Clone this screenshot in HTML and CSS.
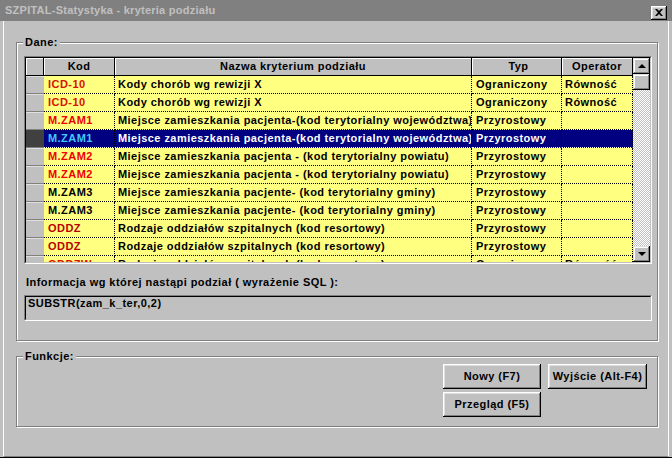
FILE: index.html
```html
<!DOCTYPE html>
<html lang="pl">
<head>
<meta charset="utf-8">
<title>SZPITAL-Statystyka - kryteria podziału</title>
<link rel="stylesheet" href="styles.css">
</head>
<body>
<div class="window">
  <div class="titlebar">
    <span class="title">SZPITAL-Statystyka - kryteria podziału</span>
    <span class="close"><svg width="8" height="7" viewBox="0 0 8 7"><path d="M0 0h2l2 2 2-2h2L5 3.5 8 7H6L4 5 2 7H0l3-3.5z" fill="#000"/></svg></span>
  </div>
  <div class="client">
    <div class="group dane">
      <span class="group-label">Dane:</span>
      <div class="sunken grid">
        <div class="inner grid-inner">
          <div class="table">
            <div class="row hdr">
              <div class="cell ind"></div>
              <div class="cell">Kod</div>
              <div class="cell">Nazwa kryterium podziału</div>
              <div class="cell">Typ</div>
              <div class="cell">Operator</div>
            </div>
            <div class="row">
              <div class="cell ind"></div>
              <div class="cell kod red">ICD-10</div>
              <div class="cell">Kody chorób wg rewizji X</div>
              <div class="cell">Ograniczony</div>
              <div class="cell">Równość</div>
            </div>
            <div class="row">
              <div class="cell ind"></div>
              <div class="cell kod red">ICD-10</div>
              <div class="cell">Kody chorób wg rewizji X</div>
              <div class="cell">Ograniczony</div>
              <div class="cell">Równość</div>
            </div>
            <div class="row">
              <div class="cell ind"></div>
              <div class="cell kod red2">M.ZAM1</div>
              <div class="cell">Miejsce zamieszkania pacjenta-(kod terytorialny województwa)</div>
              <div class="cell">Przyrostowy</div>
              <div class="cell"></div>
            </div>
            <div class="row sel">
              <div class="cell ind"></div>
              <div class="cell kod">M.ZAM1</div>
              <div class="cell">Miejsce zamieszkania pacjenta-(kod terytorialny województwa)</div>
              <div class="cell">Przyrostowy</div>
              <div class="cell"></div>
            </div>
            <div class="row">
              <div class="cell ind"></div>
              <div class="cell kod red2">M.ZAM2</div>
              <div class="cell">Miejsce zamieszkania pacjenta - (kod terytorialny powiatu)</div>
              <div class="cell">Przyrostowy</div>
              <div class="cell"></div>
            </div>
            <div class="row">
              <div class="cell ind"></div>
              <div class="cell kod red2">M.ZAM2</div>
              <div class="cell">Miejsce zamieszkania pacjenta - (kod terytorialny powiatu)</div>
              <div class="cell">Przyrostowy</div>
              <div class="cell"></div>
            </div>
            <div class="row">
              <div class="cell ind"></div>
              <div class="cell kod">M.ZAM3</div>
              <div class="cell">Miejsce zamieszkania pacjente- (kod terytorialny gminy)</div>
              <div class="cell">Przyrostowy</div>
              <div class="cell"></div>
            </div>
            <div class="row">
              <div class="cell ind"></div>
              <div class="cell kod">M.ZAM3</div>
              <div class="cell">Miejsce zamieszkania pacjente- (kod terytorialny gminy)</div>
              <div class="cell">Przyrostowy</div>
              <div class="cell"></div>
            </div>
            <div class="row">
              <div class="cell ind"></div>
              <div class="cell kod dark">ODDZ</div>
              <div class="cell">Rodzaje oddziałów szpitalnych (kod resortowy)</div>
              <div class="cell">Przyrostowy</div>
              <div class="cell"></div>
            </div>
            <div class="row">
              <div class="cell ind"></div>
              <div class="cell kod dark">ODDZ</div>
              <div class="cell">Rodzaje oddziałów szpitalnych (kod resortowy)</div>
              <div class="cell">Przyrostowy</div>
              <div class="cell"></div>
            </div>
            <div class="row">
              <div class="cell ind"></div>
              <div class="cell kod red">ODDZW</div>
              <div class="cell">Rodzaje oddziałów szpitalnych (kod resortowy)</div>
              <div class="cell">Ograniczony</div>
              <div class="cell">Równość</div>
            </div>
          </div>
          <div class="vscroll">
            <div class="sbtn"><span class="arrow up"></span></div>
            <div class="sbtn thumb"></div>
            <div class="track"></div>
            <div class="sbtn"><span class="arrow down"></span></div>
          </div>
        </div>
      </div>
      <div class="info-label">Informacja wg której nastąpi podział ( wyrażenie SQL ):</div>
      <div class="sunken sql">
        <div class="inner sql-inner">SUBSTR(zam_k_ter,0,2)</div>
      </div>
    </div>
    <div class="group funkcje">
      <span class="group-label">Funkcje:</span>
      <div class="buttons">
        <div class="btn">Nowy (F7)</div>
        <div class="btn">Wyjście (Alt-F4)</div>
        <div class="btn">Przegląd (F5)</div>
      </div>
    </div>
  </div>
</div>
</body>
</html>
```
FILE: styles.css
```css
* { box-sizing: border-box; }

body {
  margin: 0;
  width: 672px;
  height: 458px;
  overflow: hidden;
  background: #c0c0c0;
  font-family: "Liberation Sans", Arial, sans-serif;
  font-weight: bold;
  font-size: 11px;
  letter-spacing: 0.45px;
  color: #000;
}

.window {
  height: 458px;
  display: flex;
  flex-direction: column;
  border-bottom: 1px solid #000;
}

.titlebar {
  height: 21px;
  flex: none;
  background: #808080;
  color: #c0c0c0;
  display: flex;
  align-items: center;
  justify-content: space-between;
  padding: 0 5px 0 5px;
}

.title { line-height: 13px; letter-spacing: 0.25px; }

.close {
  width: 16px;
  height: 14px;
  background: #c0c0c0;
  box-shadow: inset -1px -1px #000, inset 1px 1px #fff, inset -2px -2px #808080, inset 2px 2px #dfdfdf;
  display: flex;
  align-items: center;
  justify-content: center;
  margin-top: 4px;
}

.close svg { display: block; }

.client {
  flex: 1;
  margin: 0 3px;
  border-left: 1px solid #fff;
  border-right: 1px solid #fff;
  border-bottom: 1px solid #808080;
  padding-top: 21px;
}

.group {
  position: relative;
  width: 642px;
  margin-left: 12px;
  border: 1px solid #808080;
  box-shadow: 1px 1px 0 #fff, inset 1px 1px 0 #fff;
}

.group-label {
  position: absolute;
  left: 6px;
  top: -7px;
  padding: 0 2px;
  line-height: 13px;
  background: #c0c0c0;
}

.dane {
  padding: 13px 5px 19px 7px;
}

.sunken {
  border: 1px solid;
  border-color: #808080 #fff #fff #808080;
}

.sunken > .inner {
  border: 1px solid;
  border-color: #000 #c0c0c0 #c0c0c0 #000;
}

.grid {
  width: 628px;
  height: 208px;
}

.grid-inner {
  height: 100%;
  display: flex;
}

.table {
  width: 607px;
  height: 100%;
  overflow: hidden;
}

.row {
  display: grid;
  grid-template-columns: 18px 71px 357px 90px 71px;
  height: 18px;
}

.cell {
  height: 18px;
  line-height: 17px;
  padding-left: 3px;
  white-space: nowrap;
  overflow: hidden;
  background: #ffff80;
  border-right: 1px dotted #000;
  border-bottom: 1px dotted #000;
}

.cell.kod { padding-left: 4px; }

.row .cell:nth-child(4) { padding-left: 4px; }

.cell.ind {
  background: #c0c0c0;
  border-right: none;
  border-bottom: 1px solid #808080;
  box-shadow: inset 0 1px #e0e0e0;
}

.hdr .cell {
  background: #c0c0c0;
  text-align: center;
  padding-left: 0;
  border-right: 1px solid #000;
  border-bottom: 1px solid #000;
  box-shadow: inset 1px 1px #fff;
}

.hdr .cell.ind { border-right: 1px solid #000; }

.red { color: #d81000; }
.red2 { color: #f00000; }
.dark { color: #b80000; }

.sel .cell {
  background: #000080;
  color: #fff;
  border-bottom-color: #fff;
}

.sel .cell.kod { color: #40c8ff; }

.sel .cell.ind {
  background: #404040;
  box-shadow: none;
  border-bottom-color: #808080;
}

.row.sel { box-shadow: 0 -1px 0 #fff; }

.vscroll {
  width: 17px;
  height: 100%;
  display: flex;
  flex-direction: column;
}

.sbtn {
  height: 16px;
  flex: none;
  background: #c0c0c0;
  box-shadow: inset -1px -1px #000, inset 1px 1px #dfdfdf, inset -2px -2px #808080, inset 2px 2px #fff;
  display: flex;
  align-items: center;
  justify-content: center;
}

.track {
  flex: 1;
  background-color: #c0c0c0;
  background-image: conic-gradient(#fff 25%, #c0c0c0 0 50%, #fff 0 75%, #c0c0c0 0);
  background-size: 2px 2px;
}

.arrow {
  width: 0;
  height: 0;
  border-left: 4px solid transparent;
  border-right: 4px solid transparent;
}

.arrow.up { border-bottom: 4px solid #000; margin-top: -1px; }
.arrow.down { border-top: 4px solid #000; }

.info-label {
  margin: 11px 0 0 2px;
  line-height: 14px;
}

.sql {
  margin-top: 6px;
  width: 628px;
  height: 26px;
}

.sql-inner {
  height: 100%;
  padding-left: 2px;
  line-height: 13px;
}

.funkcje {
  margin-top: 15px;
  height: 71px;
  padding: 7px 10px 0 0;
}

.buttons {
  display: grid;
  grid-template-columns: 98px 99px;
  grid-auto-rows: 25px;
  gap: 3px 7px;
  justify-content: end;
}

.btn {
  background: #c0c0c0;
  box-shadow: inset -1px -1px #000, inset 1px 1px #fff, inset -2px -2px #808080, inset 2px 2px #dfdfdf;
  display: flex;
  align-items: center;
  justify-content: center;
  line-height: 13px;
}
```
